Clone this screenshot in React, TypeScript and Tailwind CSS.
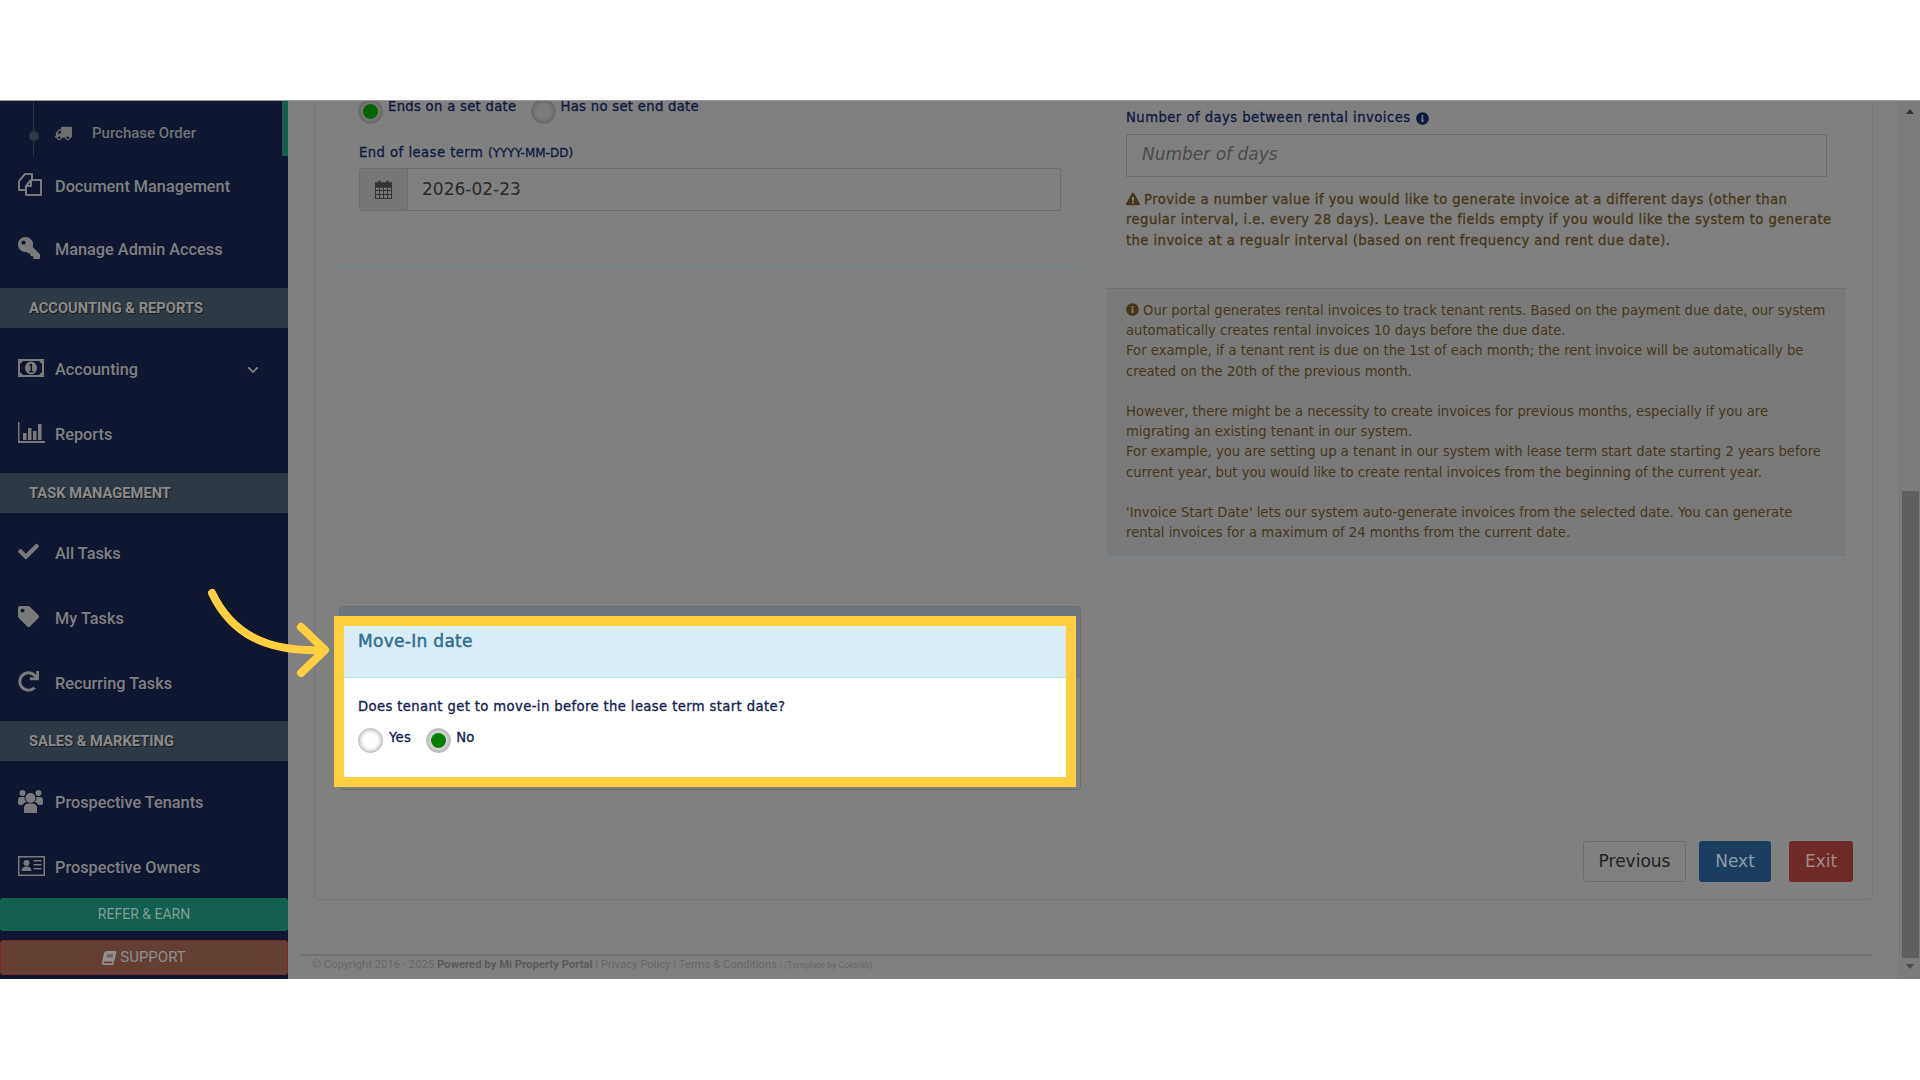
import type { ReactNode } from 'react';
import {
  FaBook,
  FaCheck,
  FaChevronDown,
  FaExclamationTriangle,
  FaInfoCircle,
  FaKey,
  FaRedo,
  FaTag,
  FaTruck,
} from 'react-icons/fa';

function BarsIcon() {
  return (
    <svg width="27" height="21" viewBox="0 0 27 21" fill="#7a7a7a">
      <path d="M0 0h1.5v19H27v2H0z" />
      <rect x="5" y="11" width="3.5" height="7" />
      <rect x="10" y="6" width="3.5" height="12" />
      <rect x="15" y="9" width="3.5" height="9" />
      <rect x="20" y="2" width="3.5" height="16" />
    </svg>
  );
}

function FilesIcon() {
  return (
    <svg width="24" height="23" viewBox="0 0 24 23" fill="none" stroke="#7a7a7a" strokeWidth="2" strokeLinejoin="round">
      <path d="M1 8L7 1h7v5" />
      <path d="M1 8v9h7" />
      <path d="M8 13L13 7h10v15H8z" />
      <path d="M13 7v6H8" />
    </svg>
  );
}

function MoneyIcon() {
  return (
    <svg width="26" height="18" viewBox="0 0 26 18">
      <rect width="26" height="18" fill="#7a7a7a" />
      <path d="M5 2h16l3 3v8l-3 3H5l-3-3V5z" fill="#0e1630" />
      <ellipse cx="13" cy="9" rx="6" ry="6.5" fill="#7a7a7a" />
      <path d="M11.5 5.5L14 4.5V12h1.5v1.2h-4.5V12h1.5V6.5l-1.5.4z" fill="#0e1630" />
    </svg>
  );
}

function GroupIcon() {
  return (
    <svg width="25" height="24" viewBox="0 0 25 24" fill="#7a7a7a">
      <circle cx="12.5" cy="9" r="5" />
      <circle cx="4.5" cy="4" r="3" />
      <circle cx="20.5" cy="4" r="3" />
      <path d="M6 24v-5c0-3 2-4.500 4-4.500h5c2 0 4 1.500 4 4.500v5z" />
      <path d="M0 15v-4c0-2 1-3 3-3h3.500c0 2 .5 4 2 5-2 .5-3.500 1.500-4 3H1.500z" />
      <path d="M25 15v-4c0-2-1-3-3-3h-3.500c0 2-.5 4-2 5 2 .5 3.500 1.500 4 3h3z" />
    </svg>
  );
}

function CardIcon() {
  return (
    <svg width="27" height="20" viewBox="0 0 27 20" fill="#7a7a7a">
      <path d="M0 0h27v20H0zM1.500 1.500v17h24v-17z" fillRule="evenodd" />
      <circle cx="8.500" cy="7" r="3" />
      <path d="M3.500 15c0-3 2-4.500 5-4.500s5 1.500 5 4.500z" />
      <rect x="15.500" y="4" width="8" height="1.500" />
      <rect x="15.500" y="8" width="8" height="1.500" />
      <rect x="15.500" y="12" width="8" height="1.500" />
    </svg>
  );
}

function CalendarIcon() {
  return (
    <svg width="17" height="19" viewBox="0 0 17 19" fill="none" stroke="#333333" strokeWidth="1">
      <rect x="0.500" y="3" width="16" height="15.500" />
      <path d="M0.500 7h16M0.500 10.500h16M0.500 14.500h16M4.500 7v11.500M8.500 7v11.500M12.500 7v11.500" />
      <path d="M4.500 0.500v4M12.500 0.500v4" strokeWidth="2" />
      <rect x="0.500" y="3" width="16" height="4" fill="#333333" />
    </svg>
  );
}

function SideItem({ icon, label, className }: { icon: ReactNode; label: string; className: string }) {
  return (
    <div className={`flex items-center pl-[18px] text-[16.3px] font-medium text-[#808080] ${className}`}>
      <span className="w-[37px] flex items-center -mt-[6px]">{icon}</span>
      {label}
    </div>
  );
}

function SideHeader({ label, className }: { label: string; className?: string }) {
  return (
    <div className={`h-[40px] shrink-0 flex items-center pl-[29px] bg-[#2d3944] text-[14.7px] font-bold text-[#8a8a8a] uppercase [text-shadow:1px_1px_0_#1a1a1a] ${className ?? ''}`}>
      {label}
    </div>
  );
}

function Radio({ checked, lit }: { checked?: boolean; lit?: boolean }) {
  return (
    <span className={`w-[25px] h-[25px] shrink-0 rounded-full flex items-center justify-center border ${lit
      ? `border-[#bbbbbb] shadow-[inset_0_0_5px_#999999] ${checked ? 'bg-[#dddddd]' : 'bg-white'}`
      : 'border-[#6a6a6a] bg-[#7c7c7c] shadow-[inset_0_0_5px_#555555]'}`}>
      {checked && <span className={`w-[15px] h-[15px] rounded-full ${lit ? 'bg-[#008000]' : 'bg-[#006400]'}`}></span>}
    </span>
  );
}

export default function App() {
  return (
    <div className="w-[1920px] h-[1080px] bg-white overflow-hidden font-['DejaVu_Sans',sans-serif]">
      <div className="h-[100px]"></div>
      <div className="h-[879px] flex bg-[#808080] overflow-hidden relative border-t border-[#999999]">
        {/* sidebar */}
        <aside className="w-[288px] shrink-0 bg-[#0e1630] flex flex-col font-['Roboto',sans-serif]">
          <div className="h-[55px] shrink-0 relative flex items-center pl-[55px] pt-[10px] text-[15px] font-medium text-[#737373]">
            <span className="absolute left-[33px] top-0 h-[55px] w-px bg-[#2d3944]"></span>
            <span className="absolute left-[29px] top-[30px] w-[10px] h-[10px] rounded-full bg-[#2d3944]"></span>
            <span className="absolute right-0 top-0 w-[6px] h-[55px] bg-[#14604e]"></span>
            <FaTruck size={17} className="mr-[20px] -scale-x-100" color="#6e6e6e" />
            Purchase Order
          </div>
          <SideItem className="h-[63px] shrink-0" icon={<FilesIcon />} label="Document Management" />
          <SideItem className="h-[69px] shrink-0 pb-[6px]" icon={<FaKey size={22} color="#7a7a7a" className="-scale-x-100" />} label="Manage Admin Access" />
          <SideHeader label="Accounting & Reports" />
          <div className="mt-[10px] relative">
            <SideItem className="h-[65px]" icon={<MoneyIcon />} label="Accounting" />
            <FaChevronDown size={12} color="#7a7a7a" className="absolute right-[29px] top-[26px]" />
          </div>
          <SideItem className="h-[65px] shrink-0" icon={<BarsIcon />} label="Reports" />
          <SideHeader label="Task Management" className="mt-[5px]" />
          <SideItem className="h-[65px] shrink-0 mt-[9px]" icon={<FaCheck size={21} color="#7a7a7a" />} label="All Tasks" />
          <SideItem className="h-[65px] shrink-0" icon={<FaTag size={21} color="#7a7a7a" />} label="My Tasks" />
          <SideItem className="h-[65px] shrink-0" icon={<FaRedo size={21} color="#7a7a7a" />} label="Recurring Tasks" />
          <SideHeader label="Sales & Marketing" className="mt-[4px]" />
          <SideItem className="h-[65px] shrink-0 mt-[10px]" icon={<GroupIcon />} label="Prospective Tenants" />
          <SideItem className="h-[65px] shrink-0 -mb-[3px]" icon={<CardIcon />} label="Prospective Owners" />
          <div className="h-[33px] shrink-0 flex items-center justify-center bg-[#14604e] rounded-[3px] text-[14px] text-[#7f9f95]">REFER &amp; EARN</div>
          <div className="h-[35px] shrink-0 mt-[9px] flex items-center justify-center gap-[4px] bg-[#643f34] border border-[#7a2a2a] rounded-[3px] text-[15px] text-[#8f8f8f]">
            <FaBook size={14} className="-skew-x-12" />
            SUPPORT
          </div>
        </aside>

        {/* page */}
        <main className="flex-1 min-w-0 px-[26px] text-[13.2px] leading-[20.2px] text-[#0e1a40]">
          <div className="h-[799px] border border-t-0 border-[#767676] rounded-b-[4px] pl-[24px] pr-[19px] flex flex-col">
            <div className="h-[691px] shrink-0 flex gap-[25px]">
              <div className="w-[742px] shrink-0">
                <section className="h-[168px] border border-t-0 border-[#6f8a94] rounded-b-[4px] px-[19px]">
                  <div className="flex items-start h-[52px] -mt-[2px] -ml-[1px] leading-[14px] tracking-[0.3px] [-webkit-text-stroke:0.3px]">
                    <Radio checked />
                    <span className="ml-[5px] mt-[1px] mr-[14px]">Ends on a set date</span>
                    <Radio />
                    <span className="ml-[5px] mt-[1px]">Has no set end date</span>
                  </div>
                  <div className="h-[17px] -mt-[8px] tracking-[0.46px] [-webkit-text-stroke:0.3px]">
                    End of lease term <span className="text-[12px] tracking-normal">(YYYY-MM-DD)</span>
                  </div>
                  <div className="mt-[8px] h-[43px] flex border border-[#6c6c6c] rounded-[3px]">
                    <span className="w-[48px] flex items-center justify-center bg-[#777777] border-r border-[#6c6c6c]">
                      <CalendarIcon />
                    </span>
                    <span className="flex items-center pl-[14px] text-[17px] text-[#2a2a2a]">2026-02-23</span>
                  </div>
                </section>

                <section className="mt-[339px] h-[184px] relative border border-[#666e73] rounded-[4px]">
                  <div className="h-[71px] bg-[#6f777d]"></div>
                  {/* highlighted step */}
                  <div className="absolute left-[-6px] top-[9px] w-[742px] h-[171px] border-[10px] border-[#ffcf40] bg-white">
                    <div className="h-[52px] bg-[#d9edf7] border-b border-[#bce8f1] pl-[14px] pt-[3px] text-[17px] leading-[24px] tracking-[0.3px] [-webkit-text-stroke:0.5px] text-[#31708f]">Move-In date</div>
                    <div className="pl-[14px] pt-[19px] text-[#10204f] tracking-[0.38px] [-webkit-text-stroke:0.3px]">Does tenant get to move-in before the lease term start date?</div>
                    <div className="pl-[14px] mt-[11px] flex items-start text-[#10204f] tracking-[0.3px] [-webkit-text-stroke:0.3px]">
                      <Radio lit />
                      <span className="ml-[6px] mr-[15px]">Yes</span>
                      <Radio lit checked />
                      <span className="ml-[5px]">No</span>
                    </div>
                  </div>
                </section>
              </div>

              <section className="w-[741px] h-[456px] shrink-0 border border-t-0 border-[#6f8a94] rounded-b-[4px] flex flex-col">
                <div className="h-[188px] shrink-0 border-b border-[#707070] px-[19px] pt-[7px]">
                  <div className="flex items-center gap-[5px] tracking-[0.46px] [-webkit-text-stroke:0.3px]">
                    Number of days between rental invoices <FaInfoCircle size={13} />
                  </div>
                  <div className="mt-[6px] h-[43px] flex items-center border border-[#6c6c6c] pl-[15px] pb-[3px] text-[17px] italic text-[#4a4a4a]">Number of days</div>
                  <p className="mt-[13px] text-[#453619] tracking-[0.42px] whitespace-nowrap [-webkit-text-stroke:0.3px]">
                    <FaExclamationTriangle size={14} className="inline mr-[4px] -mt-[3px]" />
                    Provide a number value if you would like to generate invoice at a different days (other than
                    <br />
                    regular interval, i.e. every 28 days). Leave the fields empty if you would like the system to generate
                    <br />
                    the invoice at a regualr interval (based on rent frequency and rent due date).
                  </p>
                </div>
                <div className="flex-1 bg-[#7a7a7a] px-[19px] pt-[12px] text-[#453619]">
                  <p>
                    <FaInfoCircle size={13} className="inline mr-[4px] -mt-[3px]" />
                    Our portal generates rental invoices to track tenant rents. Based on the payment due date, our system automatically creates rental invoices 10 days before the due date.
                    <br />
                    For example, if a tenant rent is due on the 1st of each month; the rent invoice will be automatically be created on the 20th of the previous month.
                    <br />
                    <br />
                    However, there might be a necessity to create invoices for previous months, especially if you are migrating an existing tenant in our system.
                    <br />
                    For example, you are setting up a tenant in our system with lease term start date starting 2 years before current year, but you would like to create rental invoices from the beginning of the current year.
                    <br />
                    <br />
                    'Invoice Start Date' lets our system auto-generate invoices from the selected date. You can generate rental invoices for a maximum of 24 months from the current date.
                  </p>
                </div>
              </section>
            </div>

            <div className="mt-[49px] flex justify-end text-[17px]">
              <button className="w-[103px] h-[41px] pb-[1px] border border-[#6c6c6c] rounded-[3px] text-[#222222]">Previous</button>
              <button className="w-[72px] h-[41px] pb-[1px] ml-[13px] rounded-[3px] bg-[#1b3d5f] text-[#8f9ba8]">Next</button>
              <button className="w-[64px] h-[41px] pb-[1px] ml-[18px] rounded-[3px] bg-[#6f2926] text-[#a08a8a]">Exit</button>
            </div>
          </div>
          <footer className="mt-[54px] -ml-[14px] mr-[1px] border-t-2 border-[#707070] pl-[12px] pt-[1px] font-['Roboto',sans-serif] text-[11.3px] leading-[16px] text-[#666666] whitespace-nowrap">
            © Copyright 2016 - 2025 <b className="font-bold text-[#5a5a5a]">Powered by Mi Property Portal</b> | Privacy Policy | Terms &amp; Conditions <span className="text-[9px]">| (Template by Colorlib)</span>
          </footer>
        </main>

        {/* scrollbar */}
        <div className="w-[21px] shrink-0 bg-[#7c7c7c] border-l border-[#767676] flex flex-col items-center">
          <span className="mt-[8px] w-0 h-0 border-x-[4px] border-x-transparent border-b-[5px] border-b-[#333333]"></span>
          <span className="mt-[377px] w-[17px] h-[467px] bg-[#5f5f5f]"></span>
          <span className="mt-[6px] w-0 h-0 border-x-[4px] border-x-transparent border-t-[5px] border-t-[#4a4a4a]"></span>
        </div>

        {/* pointer to the highlighted step */}
        <svg className="absolute left-[200px] top-[480px]" width="140" height="110" viewBox="200 580 140 110" fill="none" stroke="#ffcf40" strokeWidth="8" strokeLinecap="round" strokeLinejoin="round">
          <path d="M212 592C232 634 268 651 322 649" />
          <path d="M301 626L325 649L301 672" />
        </svg>
      </div>
      <div className="h-[101px]"></div>
    </div>
  );
}
